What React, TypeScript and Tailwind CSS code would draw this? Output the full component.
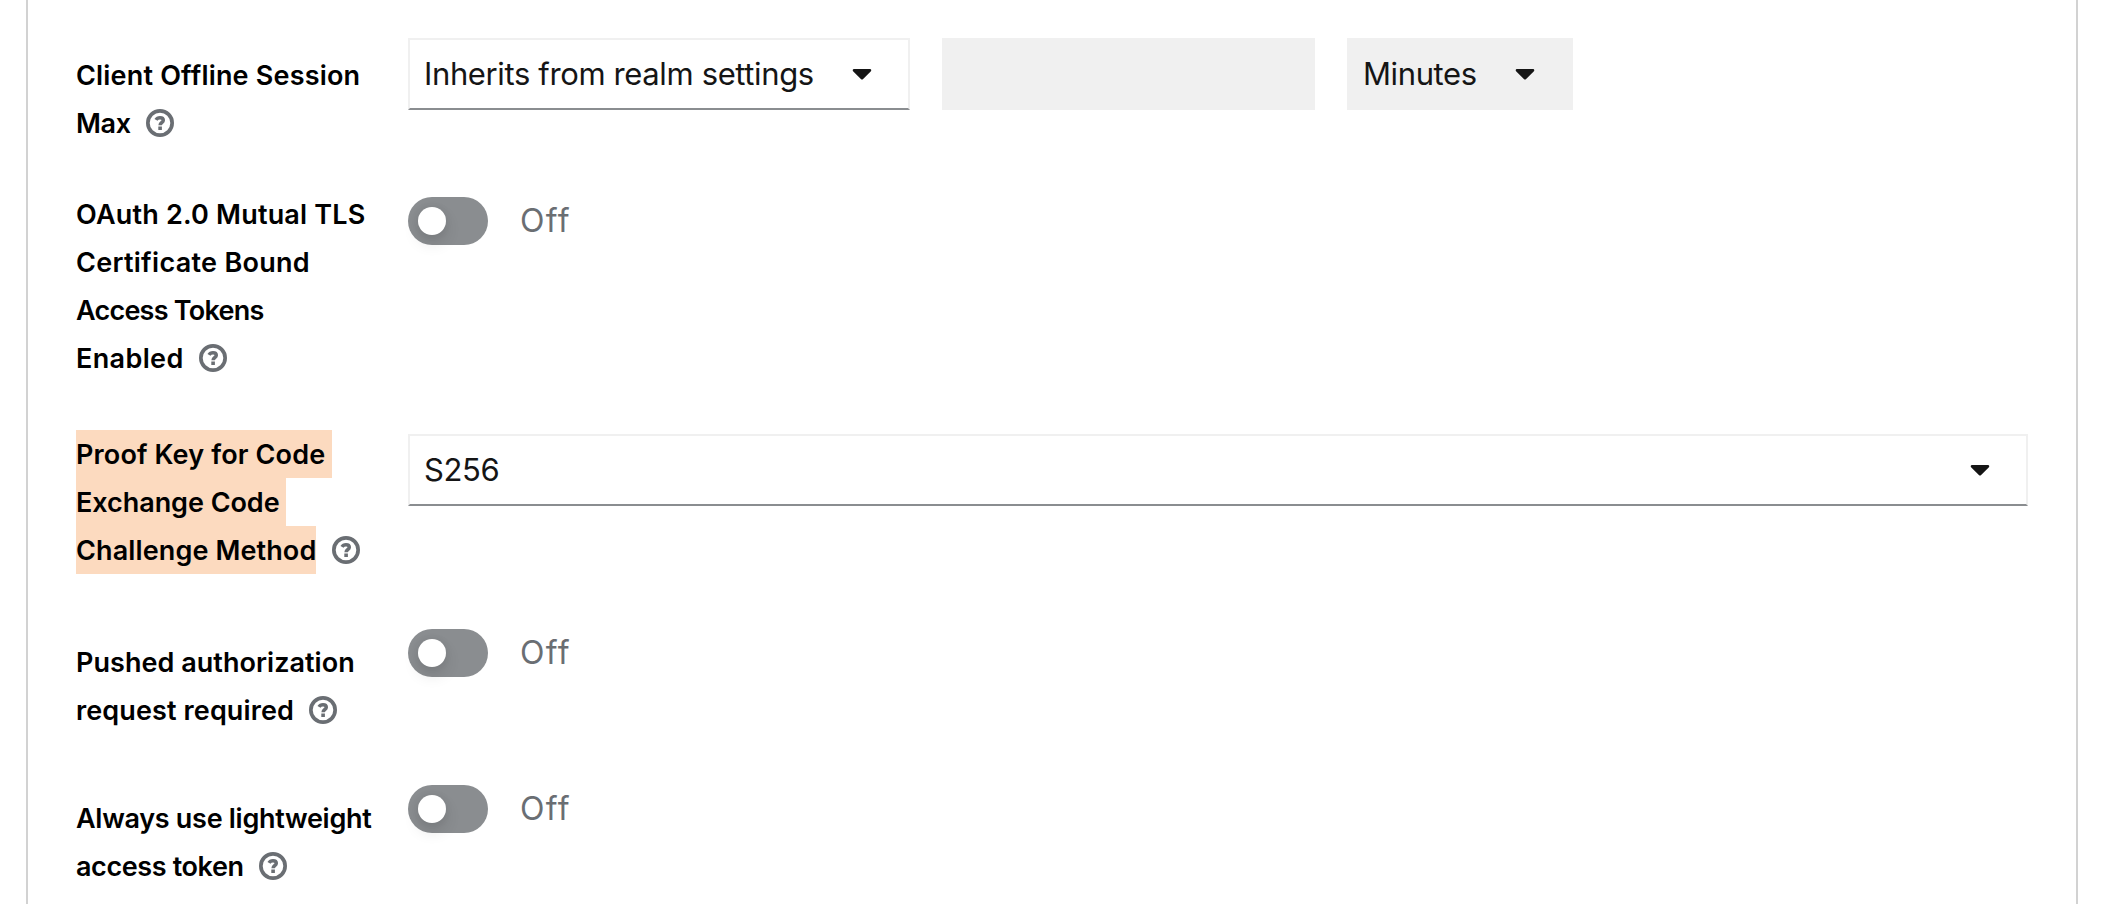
import type { ReactNode } from "react";
import { FaCaretDown } from "react-icons/fa";

function HelpIcon() {
  return (
    <svg viewBox="0 0 28 28" className="block size-7" fill="none" stroke="currentColor">
      <circle cx="14" cy="14" r="12.15" strokeWidth="3.7" />
      <path d="M10 10.9C10.8 9.5 12.1 8.8 14 8.8c2 0 3.3 1 3.3 2.5 0 2.3-3.2 2.1-3.2 4.9" strokeWidth="3.5" />
      <rect x="12.3" y="17.5" width="3.6" height="3.5" fill="currentColor" stroke="none" />
    </svg>
  );
}

function Line({ children, className = "", mark = "" }: { children: string; className?: string; mark?: string }) {
  return (
    <span className={`block h-12 whitespace-nowrap ${mark}`}>
      <span className={className}>{children}</span>
    </span>
  );
}

function LastLine({ children, width, className, mark = "" }: { children: string; width: string; className: string; mark?: string }) {
  return (
    <span className="flex h-12 items-center whitespace-nowrap">
      <span className={`shrink-0 ${width}`}>
        <span className={`block h-12 ${mark}`}>
          <span className={className}>{children}</span>
        </span>
      </span>
      <button type="button" aria-label="Help" className="shrink-0 text-[#6a6e73]">
        <HelpIcon />
      </button>
    </span>
  );
}

function Row({ label, children, className = "", labelClass = "" }: { label: ReactNode; children: ReactNode; className?: string; labelClass?: string }) {
  return (
    <div className={`flex items-start ${className}`}>
      <label className={`block w-[332px] shrink-0 text-[27px] leading-[50px] font-semibold text-black ${labelClass}`}>{label}</label>
      {children}
    </div>
  );
}

function Select({ children, className, textClass = "" }: { children: string; className: string; textClass?: string }) {
  return (
    <div className={`flex h-[72px] items-center justify-between border-2 pl-[14px] text-[31px] leading-[48px] text-[#151515] ${className}`}>
      <span className={`whitespace-nowrap ${textClass}`}>{children}</span>
      <FaCaretDown className="mb-[2px] h-8 w-5 shrink-0" />
    </div>
  );
}

function Toggle({ className = "" }: { className?: string }) {
  return (
    <div className={`flex h-12 items-center gap-8 ${className}`}>
      <div role="switch" aria-checked="false" className="flex h-12 w-20 items-center rounded-full bg-[#8a8d90] pl-[10px]">
        <div className="size-7 rounded-full bg-white shadow-[0_8px_16px_0_rgba(3,3,3,0.12),0_0_8px_0_rgba(3,3,3,0.06)]" />
      </div>
      <span className="text-[32px] leading-[48px] tracking-[1.3px] text-[#6a6e73]">Off</span>
    </div>
  );
}

const outlined = "border-t-[#f0f0f0] border-r-[#f0f0f0] border-b-[#8a8d90] border-l-[#f0f0f0] bg-white";

export default function App() {
  return (
    <div className="h-[904px] w-full overflow-hidden bg-white pr-[46px] pl-[26px] font-['Inter','Liberation_Sans',sans-serif]">
      <div className="h-full border-x-2 border-[#d2d2d2] pt-[38px] pr-12 pl-12">
        <Row
          labelClass="pt-[13px]"
          label={
            <>
              <Line className="tracking-[0.19px]">Client Offline Session</Line>
              <LastLine width="w-[70px]" className="tracking-[-0.3px]">Max</LastLine>
            </>
          }
        >
          <div className="flex gap-8">
            <Select className={`w-[502px] pr-[36px] ${outlined}`} textClass="tracking-[-0.37px]">Inherits from realm settings</Select>
            <input aria-label="Duration" disabled className="h-[72px] w-[373px] bg-[#f0f0f0]" />
            <Select className="w-[226px] border-[#f0f0f0] bg-[#f0f0f0] pr-[36px]" textClass="tracking-[-0.4px]">Minutes</Select>
          </div>
        </Row>

        <Row
          className="mt-[43px]"
          label={
            <>
              <Line className="tracking-[0.2px]">OAuth 2.0 Mutual TLS</Line>
              <Line className="tracking-[0.29px]">Certificate Bound</Line>
              <Line className="tracking-[-0.76px]">Access Tokens</Line>
              <LastLine width="w-[123px]" className="tracking-[0.36px]">Enabled</LastLine>
            </>
          }
        >
          <Toggle className="mt-[7px]" />
        </Row>

        <Row
          className="mt-[47.5px]"
          label={
            <>
              <Line mark="w-64 bg-[#fcdabf]" className="tracking-[0.14px]">Proof Key for Code</Line>
              <Line mark="w-[210px] bg-[#fcdabf]" className="tracking-[-0.05px]">Exchange Code</Line>
              <LastLine width="w-64" mark="w-60 bg-[#fcdabf]" className="tracking-[0.12px]">Challenge Method</LastLine>
            </>
          }
        >
          <Select className={`mt-[4.5px] flex-1 pr-[36px] ${outlined}`} textClass="tracking-[-0.35px]">S256</Select>
        </Row>

        <Row
          className="mt-[55.5px]"
          labelClass="pt-[9px]"
          label={
            <>
              <Line className="tracking-[0.04px]">Pushed authorization</Line>
              <LastLine width="w-[233px]" className="tracking-[0.12px]">request required</LastLine>
            </>
          }
        >
          <Toggle />
        </Row>

        <Row
          className="mt-[51px]"
          labelClass="pt-[9px]"
          label={
            <>
              <Line className="tracking-[-0.29px]">Always use lightweight</Line>
              <LastLine width="w-[183px]" className="tracking-[-0.39px]">access token</LastLine>
            </>
          }
        >
          <Toggle />
        </Row>
      </div>
    </div>
  );
}
